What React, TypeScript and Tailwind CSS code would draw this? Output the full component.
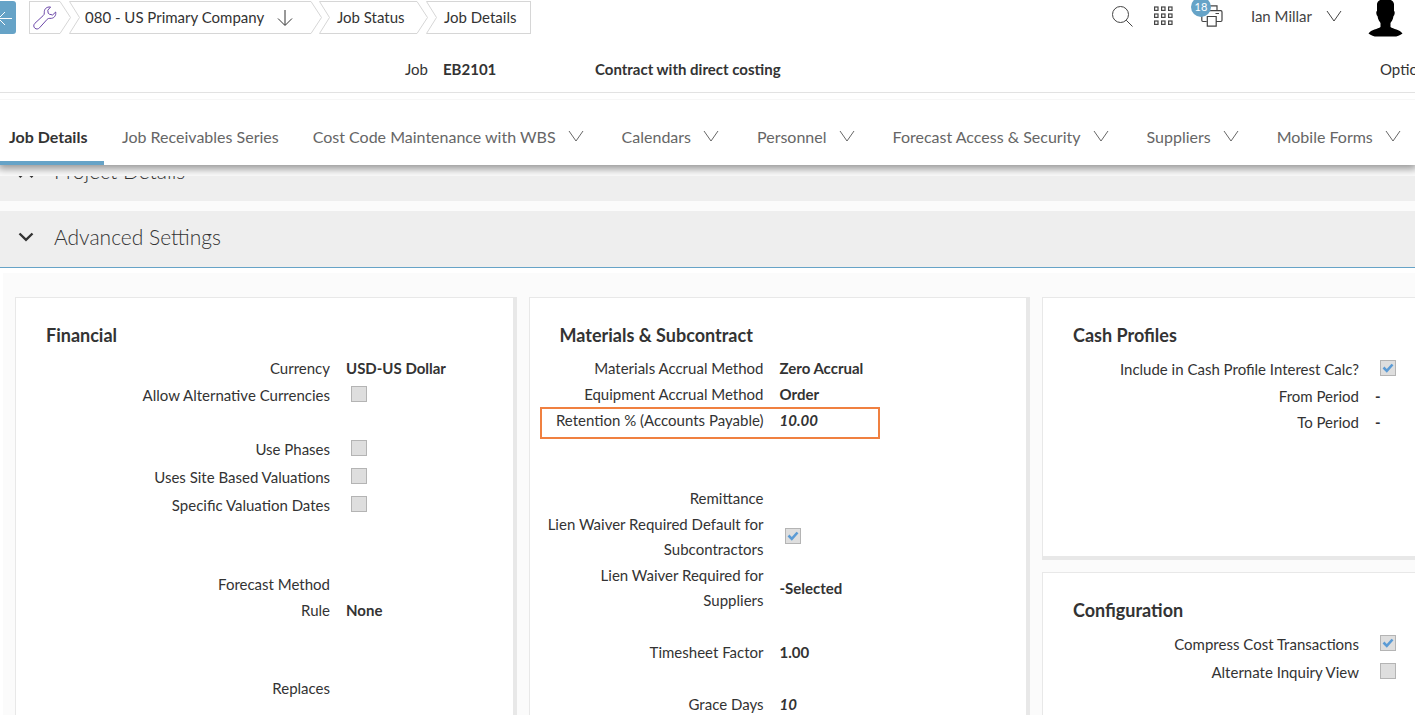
import type { ReactNode } from "react";

function ChevronV({ className = "" }: { className?: string }) {
  return (
    <svg className={className} width="16" height="12" viewBox="0 0 16 12" fill="none" stroke="currentColor" strokeWidth="1" aria-hidden="true">
      <path d="M1 1 L8 11 L15 1" />
    </svg>
  );
}

function Notch() {
  return (
    <svg width="11" height="33" viewBox="0 0 11 33" fill="none" stroke="#d6d6d6" strokeWidth="1" className="shrink-0" aria-hidden="true">
      <path d="M11 0.5 H0.5 L10.5 16.5 L0.5 32.5 H11" />
    </svg>
  );
}

function Point() {
  return (
    <svg width="11" height="33" viewBox="0 0 11 33" fill="none" stroke="#d6d6d6" strokeWidth="1" className="shrink-0" aria-hidden="true">
      <path d="M0 0.5 L10.5 16.5 L0 32.5" />
    </svg>
  );
}

function Breadcrumb() {
  return (
    <nav aria-label="Breadcrumb" className="ml-[13px] flex h-[33px] text-[15px]">
      <a href="#tools" aria-label="Tools" className="flex">
        <span className="flex w-[31px] items-center border-y border-l border-[#d6d6d6] pl-[3px]">
          <svg width="24" height="24" viewBox="0 0 24 24" fill="none" stroke="#6b46a8" strokeWidth="1" strokeLinejoin="round" className="shrink-0" aria-hidden="true">
            <path d="M17.600 1 C13.500 0.600 11 3 11.300 6.800 C11.400 8.200 11 8.900 10.200 9.600 L1.800 17.400 C0.300 18.900 0.500 21 1.900 22.200 C3.300 23.400 5.200 23.200 6.500 21.800 L14.200 13.300 C15 12.500 15.800 12.300 17 12.400 C21 12.600 23.300 9.800 22.700 6 L19.600 9 L16.400 8.200 L15.200 7.200 L14.800 4.200 Z" />
          </svg>
        </span>
        <Point />
      </a>
      <button type="button" className="-ml-0.5 flex">
        <Notch />
        <span className="flex h-[33px] w-[231px] items-center justify-between border-y border-[#d6d6d6] pr-[18px] pl-[5px]">
          080 - US Primary Company
          <svg width="16" height="18" viewBox="0 0 16 18" fill="none" stroke="currentColor" strokeWidth="1" aria-hidden="true">
            <path d="M8 1 V16 M1 9.5 L8 16.5 L15 9.5" />
          </svg>
        </span>
        <Point />
      </button>
      <a href="#status" className="-ml-[3px] flex">
        <Notch />
        <span className="flex w-[87px] items-center border-y border-[#d6d6d6] pb-px pl-[7px]">Job Status</span>
        <Point />
      </a>
      <a href="#details" className="-ml-0.5 flex">
        <Notch />
        <span className="flex w-[94px] items-center border-y border-r border-[#d6d6d6] pb-px pl-[7px]">Job Details</span>
      </a>
    </nav>
  );
}

function TopBar() {
  return (
    <header className="flex items-start pt-px">
      <button type="button" aria-label="Back" className="flex h-[33px] w-4 items-center rounded-r-[3px] bg-[#66a3c7] text-white">
        <svg width="12" height="16" viewBox="0 0 12 16" fill="none" stroke="currentColor" strokeWidth="1" aria-hidden="true">
          <path d="M12 8.5 H0 M5 2 L-1.5 8.5 L5 15" />
        </svg>
      </button>
      <Breadcrumb />
      <div className="ml-auto flex h-[30px] items-center pr-3 text-[#444]">
        <button type="button" aria-label="Search">
          <svg width="21" height="21" viewBox="0 0 21 21" fill="none" stroke="currentColor" strokeWidth="1" aria-hidden="true">
            <circle cx="8.5" cy="8.5" r="8" />
            <path d="M14.2 14.2 L20.5 20.5" />
          </svg>
        </button>
        <button type="button" aria-label="Apps" className="ml-[21px]">
          <svg width="19" height="20" viewBox="0 0 19 20" fill="none" stroke="currentColor" strokeWidth="1.2" aria-hidden="true">
            {[1, 8, 15].map((y) => [1, 8, 15].map((x) => <rect key={`${x}-${y}`} x={x - 0.4} y={y} width="3.4" height="3.4" />))}
          </svg>
        </button>
        <button type="button" aria-label="Print queue" className="relative ml-7">
          <svg width="22" height="22" viewBox="0 0 22 22" fill="none" stroke="currentColor" strokeWidth="1.2" aria-hidden="true">
            <path d="M5.500 5.500 V0.800 H16 V5.500 M5.500 16.500 H2 Q0.800 16.500 0.800 15.300 V7 Q0.800 5.600 2 5.600 H19.800 Q21 5.600 21 7 V15.300 Q21 16.500 19.800 16.500 H15.500 M6.300 11.500 H15.200 V21.200 H6.300 Z M14.500 8.500 H18" />
          </svg>
          <span className="absolute -top-2 -left-[10px] flex size-5 items-center justify-center rounded-full bg-[#66a3c7] text-[11px] text-white">18</span>
        </button>
        <button type="button" className="ml-7 flex items-center gap-3.5 text-[15px]">
          Ian Millar
          <ChevronV />
        </button>
        <svg width="35" height="38" viewBox="0 0 35 38" className="mt-1 ml-[26px]" role="img" aria-label="Ian Millar">
          <path d="M9 5 C9.500 1.500 13 0 17.500 0 C22 0 25.500 1.500 26 5 L26 12 C27 12 27 16 25.500 17 C25 21 23 23 22.500 24 L22.500 28 C25 30 32 30.500 34.500 34.500 C32 36.500 29 37.600 26 37.600 L9 37.600 C6 37.600 3 36.500 0.500 34.500 C3 30.500 10 30 12.500 28 L12.500 24 C12 23 10 21 9.500 17 C8 16 8 12 9 12 Z" fill="#000" />
        </svg>
      </div>
    </header>
  );
}

const tabs = [
  { label: "Job Receivables Series", menu: false },
  { label: "Cost Code Maintenance with WBS", menu: true },
  { label: "Calendars", menu: true },
  { label: "Personnel", menu: true },
  { label: "Forecast Access & Security", menu: true },
  { label: "Suppliers", menu: true },
  { label: "Mobile Forms", menu: true },
];

function Tabs() {
  return (
    <nav
      aria-label="Sections"
      className="relative flex h-[65px] text-base whitespace-nowrap text-[#666] shadow-[0_2px_8px_2px_rgba(0,0,0,0.4)] [clip-path:inset(0_0_-11px_0)]"
    >
      <a href="#job" aria-current="page" className="w-[104px] shrink-0 border-b-4 border-[#66a3c7] pt-[25px] pl-[9px] font-bold text-[#333]">
        Job Details
      </a>
      <div className="flex flex-1 gap-[38px] pt-[25px] pl-[18px]">
        {tabs.map((t) =>
          t.menu ? (
            <button key={t.label} type="button" className="flex h-6 items-center gap-3">
              {t.label}
              <ChevronV className="mb-0.5" />
            </button>
          ) : (
            <a key={t.label} href="#receivables" className="-mr-1">{t.label}</a>
          ),
        )}
      </div>
    </nav>
  );
}

function SectionHeader({ title, open = false }: { title: string; open?: boolean }) {
  return (
    <h2 className="h-14 shrink-0 bg-[#eee]">
      <button type="button" aria-expanded={open} className="flex h-[52px] w-full items-center gap-5 pl-[18px] text-[21px] font-light text-[#333]">
        <svg width="16" height="10" viewBox="0 0 16 10" fill="none" stroke="currentColor" strokeWidth="2.4" className={open ? "" : "mt-1.5"} aria-hidden="true">
          <path d={open ? "M1.500 1.500 L8 7.800 L14.500 1.500" : "M1.500 8.200 L8 2 L14.500 8.200"} />
        </svg>
        {title}
      </button>
    </h2>
  );
}

function Card({ title, className = "", children }: { title: string; className?: string; children: ReactNode }) {
  return (
    <section className={`border border-r-4 border-b-4 border-[#e8e8e8] bg-white pt-6 ${className}`}>
      <h3 className="mb-2 pl-[30px] text-lg leading-[26px] font-bold">{title}</h3>
      {children}
    </section>
  );
}

function Row({ label, value, narrow = false, italic = false }: { label: string; value?: string; narrow?: boolean; italic?: boolean }) {
  return (
    <dl className="flex items-center gap-4 pb-px leading-[25px]">
      <dt className={`shrink-0 text-right ${narrow ? "w-[234px] pl-4" : "w-[314px]"}`}>{label}</dt>
      <dd className={`font-bold ${italic ? "italic" : ""}`}>{value}</dd>
    </dl>
  );
}

function CheckRow({ label, id, checked = false, narrow = false }: { label: string; id: string; checked?: boolean; narrow?: boolean }) {
  return (
    <div className={`flex items-center gap-[21px] leading-[25px] ${narrow ? "pb-px" : "h-7 pb-0.5"}`}>
      <label htmlFor={id} className={`shrink-0 text-right ${narrow ? "w-[234px]" : "w-[314px]"}`}>{label}</label>
      <span className="mb-[3px] grid size-4">
        <input
          id={id}
          type="checkbox"
          defaultChecked={checked}
          className="peer col-start-1 row-start-1 size-4 appearance-none border border-[#b4b4b4] bg-[#dedede]"
        />
        <svg viewBox="0 0 16 16" className="pointer-events-none col-start-1 row-start-1 hidden size-4 peer-checked:block" fill="none" stroke="#5b9bd5" strokeWidth="2.6" aria-hidden="true">
          <path d="M3.500 7.500 L6.800 10.800 L12.500 4.500" />
        </svg>
      </span>
    </div>
  );
}

export default function App() {
  return (
    <div className="flex h-screen flex-col overflow-hidden bg-white font-['Lato',sans-serif] text-[15px] text-[#333]">
      <TopBar />
      <div className="flex h-[59px] shrink-0 items-center border-b border-[#e2e2e2] pt-3 whitespace-nowrap">
        <span className="w-[428px] text-right">Job</span>
        <strong className="ml-[15px] w-[152px]">EB2101</strong>
        <strong>Contract with direct costing</strong>
        <span className="ml-auto w-[35px]">Options</span>
      </div>
      <div className="h-[7px] shrink-0 border-b border-[#f7f7f7]" />
      <Tabs />
      <main className="flex min-h-0 flex-1 flex-col bg-[#fbfbfb] pt-[11px]">
        <div className="flex h-[25px] shrink-0 flex-col justify-end overflow-hidden">
          <SectionHeader title="Project Details" />
        </div>
        <div className="mt-2.5 border-b border-[#66a3c7]">
          <SectionHeader title="Advanced Settings" open />
        </div>
        <div className="grid w-[110%] shrink-0 grid-cols-3 gap-3 border-t-[5px] border-l-[3px] border-white pt-6 pr-[13px] pl-3">
          <Card title="Financial" className="pb-8">
            <Row label="Currency" value="USD-US Dollar" />
            <CheckRow id="alt-currencies" label="Allow Alternative Currencies" />
            <div className="h-[26px]" />
            <CheckRow id="phases" label="Use Phases" />
            <CheckRow id="site-valuations" label="Uses Site Based Valuations" />
            <CheckRow id="valuation-dates" label="Specific Valuation Dates" />
            <div className="h-[52px]" />
            <Row label="Forecast Method" />
            <Row label="Rule" value="None" />
            <div className="h-[52px]" />
            <Row label="Replaces" />
          </Card>
          <Card title="Materials & Subcontract" className="pb-8">
            <Row narrow label="Materials Accrual Method" value="Zero Accrual" />
            <Row narrow label="Equipment Accrual Method" value="Order" />
            <div className="relative">
              <Row narrow label="Retention % (Accounts Payable)" value="10.00" italic />
              <div className="pointer-events-none absolute -top-px left-2.5 h-8 w-[340px] border-2 border-[#f08040]" />
            </div>
            <div className="h-[52px]" />
            <Row narrow label="Remittance" />
            <CheckRow narrow id="lien-default" label="Lien Waiver Required Default for Subcontractors" checked />
            <Row narrow label="Lien Waiver Required for Suppliers" value="-Selected" />
            <div className="h-[26px]" />
            <Row narrow label="Timesheet Factor" value="1.00" />
            <div className="h-[26px]" />
            <Row narrow label="Grace Days" value="10" italic />
          </Card>
          <div className="flex flex-col gap-3">
            <Card title="Cash Profiles" className="pb-[120px]">
              <div className="pl-0.5">
                <CheckRow id="interest" label="Include in Cash Profile Interest Calc?" checked />
                <Row label="From Period" value="-" />
                <Row label="To Period" value="-" />
              </div>
            </Card>
            <Card title="Configuration" className="flex-1">
              <div className="pl-0.5">
                <CheckRow id="compress" label="Compress Cost Transactions" checked />
                <CheckRow id="inquiry" label="Alternate Inquiry View" />
              </div>
            </Card>
          </div>
        </div>
      </main>
    </div>
  );
}
